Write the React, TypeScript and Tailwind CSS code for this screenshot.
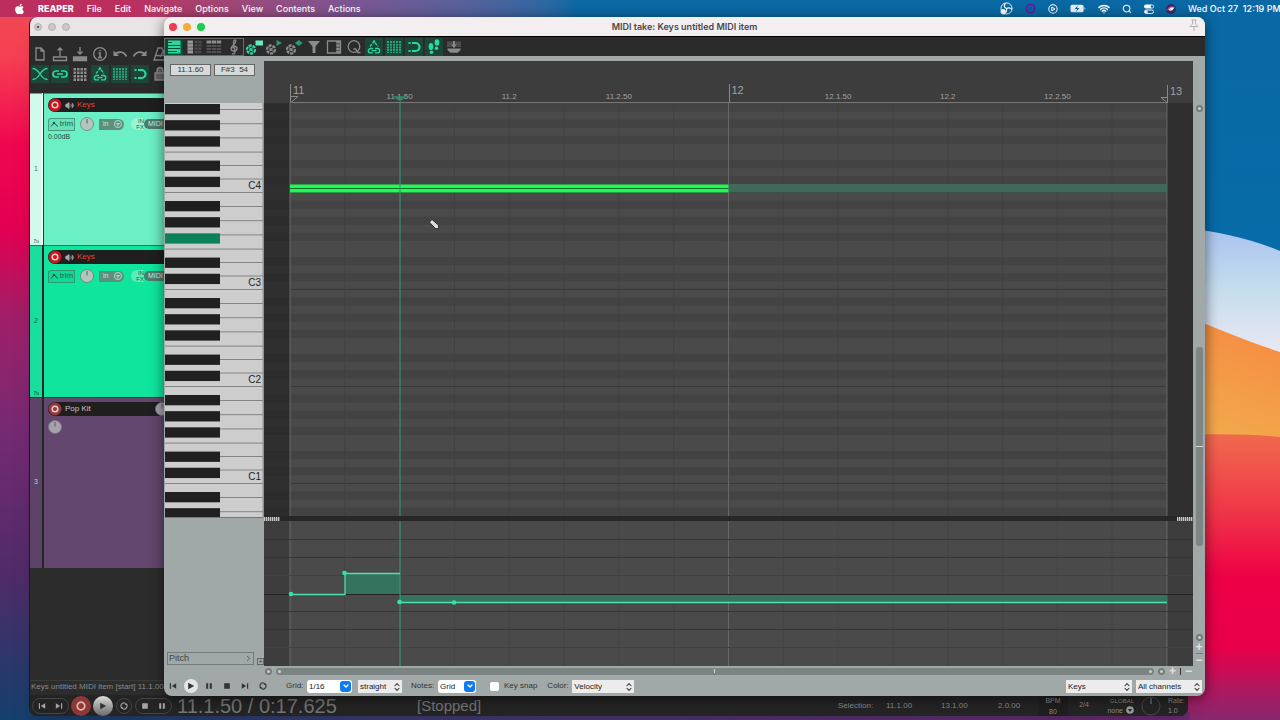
import React from 'react';
import { FaApple } from 'react-icons/fa';
import { ChevronDown, ChevronRight, ChevronsUpDown, CirclePlay, Search, Volume2, Wifi } from 'lucide-react';
import clsx from 'clsx';

const MENUS = ['File', 'Edit', 'Navigate', 'Options', 'View', 'Contents', 'Actions'];

const SEMITONE = 97 / 12;
// top edge of the A#4 row, measured from the top of the roll
const ROLL_OFFSET = 0.5;
const ROLL_HEIGHT = 413;
// going down from A#4
const BLACK_PATTERN = [true, false, true, false, true, false, false, true, false, true, false, false];

const rows = Array.from({ length: 52 }, (_, i) => ({
  y: ROLL_OFFSET + i * SEMITONE,
  black: BLACK_PATTERN[i % 12],
  isC: i % 12 === 10,
})).filter((r) => r.y < ROLL_HEIGHT);

const octaves = [4, 3, 2, 1, 0].map((n, i) => ({ n, bottom: 89.5 + i * 97 }));
const WHITE_EDGES = [13.5, 27, 40.4, 54.6, 68.8, 83];

const chain = <path d="M9 11.500H6.500a2.200 2.200 0 0 0 0 4.400H9M11 11.500h2.500a2.200 2.200 0 0 1 0 4.400H11M7.500 13.700h5" />;

const iconPaths: Record<string, React.ReactNode> = {
  file: <path d="M6 4h5l3 3v9H6zM11 4v3h3" />,
  open: <path d="M3.500 13h13v3.500h-13zM10 12V4M7.500 6.500 10 4l2.500 2.500" />,
  save: (
    <>
      <path d="M10 3v7M7.500 7.500 10 10l2.500-2.500" />
      <path d="M3.500 13h13v3.500h-13z" fill="currentColor" />
    </>
  ),
  info: (
    <>
      <circle cx="10" cy="10" r="6.300" />
      <path d="M8.500 9H10v4.500M8 13.500h4M10 6v1.300" strokeWidth="1.500" />
    </>
  ),
  undo: (
    <>
      <path d="M4.500 11c3-4 9-4 12 1.500" strokeWidth="1.700" />
      <path d="M3.500 6.500v5.500H9z" fill="currentColor" stroke="none" />
    </>
  ),
  redo: (
    <>
      <path d="M15.500 11c-3-4-9-4-12 1.500" strokeWidth="1.700" />
      <path d="M16.500 6.500v5.500H11z" fill="currentColor" stroke="none" />
    </>
  ),
  metro: <path d="M8 4h4l4 12H4zM5.500 11.500h9M10 13l4-7" />,
  fade: <path d="M2.500 4.500c8 0 7 11 15 11M2.500 15.500c8 0 7-11 15-11" />,
  link: <path d="M9 7H6a3 3 0 0 0 0 6h3M11 7h3a3 3 0 0 1 0 6h-3M7 10h6" strokeWidth="1.700" />,
  dots: (
    <g fill="currentColor" stroke="none">
      {[3.5, 7, 10.5, 14].map((x) => [4, 7.5, 11, 14.5].map((y) => <rect key={`${x}-${y}`} x={x} y={y} width="2.500" height="2.500" />))}
    </g>
  ),
  envLink: (
    <>
      <path d="M6 9.500 10 4.500l4 5" strokeDasharray="3 1" />
      <circle cx="10" cy="4.500" r="1.200" fill="currentColor" stroke="none" />
      {chain}
    </>
  ),
  grid: <path d="M4 4v12M7 4v12M10 4v12M13 4v12M16 4v12" strokeDasharray="2 0.700" />,
  snap: (
    <>
      <path d="M8 6h3.500a4 4 0 0 1 0 8H8" strokeWidth="2.200" />
      <path d="M4.500 6h2M4.500 14h2" strokeWidth="2.200" />
    </>
  ),
  lock: <path d="M5 9h10v7H5zM7 9V6.500a3 3 0 0 1 6 0V9" fill="currentColor" fillOpacity="0.6" />,
  pianoRoll: (
    <>
      <path d="M4 3.500h12.500v13H4z" fill="currentColor" stroke="none" />
      <path d="M4 5.500h4M4 8.500h12M4 11.500h12M4 14.500h9" stroke="#0d4a38" strokeWidth="1" />
    </>
  ),
  named: (
    <>
      <path d="M3.500 3.500h5.500v13H3.500z" fill="#999" stroke="none" />
      <path d="M3.500 6.700h5.500M3.500 10h5.500M3.500 13.300h5.500" stroke="#555" strokeWidth="0.800" />
      <path d="M10.500 5h7M10.500 8.300h7M10.500 11.600h7M10.500 15h7" stroke="#4c4c4c" strokeWidth="2.300" strokeDasharray="3.200 0.600" />
    </>
  ),
  eventList: (
    <>
      <path d="M2.500 5h15" strokeWidth="3" strokeDasharray="4.500 0.600" />
      <path d="M2.500 9h15M2.500 12h15M2.500 15h15" stroke="#505050" strokeWidth="2.200" strokeDasharray="4.500 0.600" />
    </>
  ),
  clef: <path d="M8 16.500c2 1.200 3.500-.5 3-2.500L9.500 6c-.4-2 1.500-4.500 2.300-2 .5 3-5.300 4.500-4.800 8 .5 3 6 2.500 6-.5 0-2.700-4-2.700-4 0" />,
  funnel: <path d="M4 4h12l-4.500 5.500V16h-3V9.500z" fill="currentColor" stroke="none" />,
  panel: (
    <>
      <path d="M3.500 4h13v12h-13z" />
      <path d="M14 4v12" strokeWidth="3.500" strokeDasharray="2.500 0.700" />
    </>
  ),
  quantize: (
    <>
      <circle cx="10" cy="9.500" r="5.800" />
      <path d="M9.500 12H11.500l2.500 3.500h2.500" />
    </>
  ),
  steps: (
    <g fill="currentColor" stroke="none">
      <ellipse cx="7" cy="9.500" rx="2.400" ry="3.500" />
      <ellipse cx="7.500" cy="15.300" rx="1.800" ry="1.800" />
      <ellipse cx="13" cy="5.500" rx="2.400" ry="3.300" />
      <ellipse cx="12.500" cy="11.200" rx="1.800" ry="1.700" />
    </g>
  ),
  dock: (
    <g fill="currentColor" stroke="none">
      <path d="M3 4.500h5V8H6l4 3 4-3h-2V4.500h5V10H3z" fillOpacity="0.35" />
      <path d="M8.800 4h2.400v3.500h2L10 11 6.800 7.500h2z" />
      <path d="M3.500 11.500h13v1.500l-3 2.800h-7L3.500 13z" />
    </g>
  ),
};

function plug(marker: React.ReactNode) {
  return (
    <>
      <circle cx="7" cy="12.500" r="4" strokeWidth="2.300" strokeDasharray="3 1" />
      <circle cx="7" cy="12.500" r="1.500" fill="currentColor" stroke="none" />
      <path d="M4 9.500l6 6M10 9.500l-6 6" strokeWidth="0.900" />
      {marker}
    </>
  );
}
iconPaths.plugRect = plug(<path d="M11.500 3.500H19v5h-7.500z" fill="#62efbb" stroke="none" />);
iconPaths.plugPlay = plug(<path d="M12.500 3v6l5.500-3z" fill="#2b9a74" stroke="none" />);
iconPaths.plugDiamond = plug(<path d="M11 6l3.800-3 3.800 3-3.800 3z" fill="#2b9a74" stroke="none" />);

function ToolIcon({ name, on, bright }: { name: string; on?: boolean; bright?: boolean }) {
  return (
    <button
      aria-label={name}
      className={clsx(
        'w-5 h-[18px] flex items-center justify-center shrink-0 border-x border-[#2a2c2b]',
        on ? 'bg-[#1d4538]' : '',
        on || bright ? 'text-[#2bd79c]' : 'text-[#8b8b8b]'
      )}
    >
      <svg className="w-5 h-5 shrink-0" viewBox="0 0 20 20" fill="none" stroke="currentColor" strokeWidth="1.300">
        {iconPaths[name]}
      </svg>
    </button>
  );
}

function Wallpaper() {
  return (
    <svg className="absolute inset-0 w-full h-full" viewBox="0 0 1280 720" preserveAspectRatio="none">
      <defs>
        <linearGradient id="left" x1="0" y1="0" x2="0" y2="1">
          <stop offset="0" stopColor="#ee4a56" />
          <stop offset="0.080" stopColor="#f63f52" />
          <stop offset="0.200" stopColor="#f00650" />
          <stop offset="0.320" stopColor="#e20052" />
          <stop offset="0.440" stopColor="#a01f68" />
          <stop offset="0.600" stopColor="#742a72" />
          <stop offset="0.800" stopColor="#4f2b68" />
          <stop offset="1" stopColor="#153f6c" />
        </linearGradient>
        <linearGradient id="sky" x1="0" y1="0" x2="0" y2="1">
          <stop offset="0" stopColor="#0a69a4" />
          <stop offset="1" stopColor="#066ca8" />
        </linearGradient>
        <linearGradient id="white" x1="0" y1="0" x2="0" y2="1">
          <stop offset="0" stopColor="#a9c2f0" />
          <stop offset="0.350" stopColor="#c4dcec" />
          <stop offset="0.700" stopColor="#e6e8f2" />
        </linearGradient>
        <linearGradient id="orange" x1="0.600" y1="0" x2="0.300" y2="1">
          <stop offset="0" stopColor="#f68a42" />
          <stop offset="1" stopColor="#f2ab4c" />
        </linearGradient>
        <linearGradient id="red" x1="0" y1="0" x2="0" y2="1">
          <stop offset="0" stopColor="#f06a4e" />
          <stop offset="0.250" stopColor="#f03a48" />
          <stop offset="0.500" stopColor="#ee0046" />
          <stop offset="0.750" stopColor="#e8004a" />
          <stop offset="1" stopColor="#85296e" />
        </linearGradient>
        <linearGradient id="floor" x1="0" y1="0" x2="1" y2="0">
          <stop offset="0" stopColor="#153f6c" />
          <stop offset="0.350" stopColor="#3f3b70" />
          <stop offset="1" stopColor="#6b2a70" />
        </linearGradient>
      </defs>
      <rect width="640" height="720" fill="url(#left)" />
      <rect x="640" width="640" height="300" fill="url(#sky)" />
      <path d="M1180 227Q1240 234 1280 251V400H1180z" fill="url(#white)" />
      <path d="M1180 313Q1240 339 1280 352V440H1180z" fill="url(#orange)" />
      <path d="M1180 435Q1240 433 1280 437V720H1180z" fill="url(#red)" />
      <rect y="712" width="1190" height="8" fill="url(#floor)" />
    </svg>
  );
}

function MenuBar() {
  return (
    <header className="relative h-[17px] flex items-center justify-between text-white text-[9px] font-medium font-['Inter',sans-serif] bg-linear-to-r from-[#bb2e5e] from-10% via-[#7d5592] via-27% to-[#0a69a4] to-45% overflow-hidden">
      <nav className="flex items-center gap-[13px] pl-[14px]">
        <FaApple className="w-[11px] h-3" />
        <button className="font-extrabold">REAPER</button>
        {MENUS.map((m) => (
          <button key={m}>{m}</button>
        ))}
      </nav>
      <div className="flex items-center gap-3 shrink-0 whitespace-nowrap">
        <svg className="w-[13px] h-[13px]" viewBox="0 0 14 14" fill="none" stroke="#fff">
          <circle cx="7" cy="7" r="6" />
          <path d="M7 7C4 6 4 3 6 1.500M7 7c3-2 5 0 6 1M7 7c1 3-1 5-3 5.500" strokeWidth="1.300" />
          <circle cx="3.500" cy="10.500" r="2.500" fill="#fff" />
        </svg>
        <svg className="w-[11px] h-[11px]" viewBox="0 0 12 12" fill="none" stroke="#5a1fa0">
          <circle cx="6" cy="6" r="4.500" strokeWidth="2" />
          <circle cx="6" cy="6" r="1.500" />
        </svg>
        <CirclePlay className="w-[10px] h-[10px]" strokeWidth={2.500} />
        <svg className="w-4 h-[9px]" viewBox="0 0 17 9">
          <rect x="0.500" y="0.500" width="14" height="8" rx="2" fill="#e7f0f6" />
          <path d="M15.500 3v3l1-1.500z" fill="#e7f0f6" />
          <path d="M8.500 1 5 5h2.500L6.500 8 10 4H7.500z" fill="#0a69a4" />
        </svg>
        <Wifi className="w-3 h-3" strokeWidth={3} />
        <Search className="w-[10px] h-[10px]" strokeWidth={2.500} />
        <svg className="w-[10px] h-[10px]" viewBox="0 0 10 10">
          <rect y="0.500" width="10" height="4" rx="2" fill="#fff" />
          <circle cx="8" cy="2.500" r="1.300" fill="#0a69a4" />
          <rect x="0.500" y="6" width="9" height="3.500" rx="1.700" fill="none" stroke="#fff" />
          <circle cx="2.300" cy="7.700" r="1.500" fill="#fff" />
        </svg>
        <svg className="w-[10px] h-[10px]" viewBox="0 0 10 10">
          <circle cx="5" cy="5" r="5" fill="#3a2c6a" />
          <path d="M1 6c2-4 4-4 8-3-2 2-5 4-8 3z" fill="#e8508c" />
          <path d="M3 6c2 2 4 0 5-2-3-1-4 0-5 2z" fill="#e9fbff" />
        </svg>
        <time className="w-[92px] whitespace-pre">Wed Oct 27  12:19 PM</time>
      </div>
    </header>
  );
}

function Knob({ dark }: { dark?: boolean }) {
  return (
    <svg className="w-[14px] h-[14px] shrink-0" viewBox="0 0 14 14">
      <circle cx="7" cy="7" r="6.500" fill={dark ? '#a9a0ae' : '#b5c6be'} stroke="#6f8079" strokeWidth="0.800" />
      <path d="M7 2v4.500" stroke="#55625c" strokeWidth="1" />
    </svg>
  );
}

interface TrackProps {
  index: number;
  name: string;
  color: string;
  side: string;
  height: string;
  volume?: string;
  armed?: boolean;
}

function Track({ index, name, color, side, height, volume, armed }: TrackProps) {
  return (
    <div className={clsx('flex shrink-0', height)}>
      <div className={clsx('w-3 flex flex-col items-center border-t border-black/40 text-[7px] leading-3', side, armed ? 'text-black/60' : 'text-white/70')}>
        <span className="flex-1" />
        <span>{index}</span>
        <span className="flex-1 flex items-end pb-[2px]">
          {armed && (
            <svg className="w-[5px] h-1 opacity-40" viewBox="0 0 5 4" fill="none" stroke="#000">
              <path d="M0 .5h2v1.500h3v2H0z" />
            </svg>
          )}
        </span>
      </div>
      <div className={clsx('w-[2px]', index === 1 ? 'bg-white border-r border-[#333]' : 'bg-[#252525]')} />
      <div className={clsx('flex-1 min-w-0 pl-1 pt-1 border-t border-black/40', color)}>
        <div className="h-[14px] rounded-l-full bg-[#1f1f1f] flex items-center gap-[3px]">
          <svg className="w-[14px] h-[14px] shrink-0" viewBox="0 0 14 14">
            <circle cx="7" cy="7" r="6.500" fill={armed ? '#c4161e' : '#8f3a3c'} />
            <circle cx="7" cy="7" r="2.800" fill="none" stroke="#f5c9c4" strokeWidth="1.500" />
          </svg>
          {armed && <Volume2 className="w-[9px] h-[9px] shrink-0 text-[#aaa] fill-[#aaa]" />}
          <span className={clsx('text-[8px] whitespace-nowrap', armed ? 'text-[#e04a28]' : 'text-[#c9c2cc]')}>{name}</span>
          {!armed && (
            <span className="ml-auto mr-[-3px]">
              <Knob dark />
            </span>
          )}
        </div>
        {armed ? (
          <div className="mt-[5px] flex items-center h-[14px] text-[8px] text-[#27594a]">
            <button className="w-[27px] h-[13px] border border-[#3f7c68]/70 bg-black/5 flex items-center justify-center gap-px rounded-tl-[3px]">
              <svg className="w-[9px] h-[7px]" viewBox="0 0 9 7" fill="none" stroke="#1f4a3c">
                <path d="M1 5.500 4 2l4 3.500" />
                <circle cx="4" cy="2" r="0.800" fill="#1f4a3c" />
              </svg>
              trim
            </button>
            <span className="ml-[5px]">
              <Knob />
            </span>
            <button className="ml-[5px] w-[25px] h-[11px] rounded-r-full bg-[#5d8f7d] text-[7px] text-[#c4e8da] flex items-center justify-between pl-1 pr-[2px]">
              in
              <svg className="w-2 h-2" viewBox="0 0 8 8">
                <circle cx="4" cy="4" r="3.500" fill="none" stroke="#b8dccd" />
                <path d="M2 3h4L4 6z" fill="#b8dccd" />
              </svg>
            </button>
            <span className="ml-[7px] w-[13px] h-3 bg-white/30 text-[6px] leading-[6px] text-right rounded-l-full">
              IN
              <br />
              FX
            </span>
            <span className="h-[10px] pl-1 bg-[#4f7a6b] text-[7px] leading-[10px] text-[#cfe9df] rounded-l-full flex-1 overflow-hidden">MIDI</span>
          </div>
        ) : (
          <div className="mt-1">
            <Knob dark />
          </div>
        )}
        {volume && <div className="mt-[2px] text-[7px] leading-[8px] text-[#1f4a3c]">{volume}</div>}
      </div>
    </div>
  );
}

function TransportShape({ kind, small }: { kind: string; small?: boolean }) {
  return (
    <svg className={clsx('shrink-0', small ? 'w-2 h-2' : 'w-[10px] h-[10px]')} viewBox="0 0 10 10" fill="currentColor" stroke="currentColor" strokeWidth="0">
      {kind === 'prev' && <path d="M1 1.500h1.500v7H1zM9 1.500v7L3.500 5z" />}
      {kind === 'next' && <path d="M7.500 1.500H9v7H7.500zM1 1.500v7L6.500 5z" />}
      {kind === 'play' && <path d="M1.500 1v8l7.500-4z" />}
      {kind === 'pause' && <path d="M1.500 1.500h2.500v7H1.500zM6 1.500h2.500v7H6z" />}
      {kind === 'stop' && <path d="M1.500 1.500h7v7h-7z" />}
      {kind === 'record' && <circle cx="5" cy="5" r="3.800" fill="none" strokeWidth="1.800" />}
      {kind === 'loop' && (
        <>
          <path d="M2.500 7.800A3.800 3.800 0 0 1 6 1.300M7.500 2.200A3.800 3.800 0 0 1 4 8.700" fill="none" strokeWidth="1.400" />
          <path d="M.5 6.500H4v3zM9.500 3.500H6v-3z" />
        </>
      )}
    </svg>
  );
}

function MainWindow() {
  return (
    <section className="absolute left-[29px] right-[92px] top-[17px] bottom-1 rounded-lg overflow-hidden bg-[#2c2c2c] flex flex-col shadow-xl border-l border-black/40 font-['Liberation_Sans',Arial,sans-serif]">
      <div className="h-[19px] shrink-0 bg-[#e9e5e7] flex items-center gap-[6px] pl-1">
        {[0, 1, 2].map((i) => (
          <button key={i} aria-label={`window ${i}`} className="w-2 h-2 rounded-full bg-[#cbc8ca] border border-[#b3b0b2] flex items-center justify-center">
            {i === 0 && <span className="w-[2px] h-[2px] rounded-full bg-[#333]" />}
          </button>
        ))}
      </div>
      <div className="h-[57px] shrink-0 pt-[9px] bg-[#2a2a2a]">
        <div className="flex">
          {['file', 'open', 'save', 'info', 'undo', 'redo', 'metro'].map((n) => (
            <ToolIcon key={n} name={n} />
          ))}
        </div>
        <div className="flex mt-[2px]">
          <ToolIcon name="fade" on />
          <ToolIcon name="link" on />
          <ToolIcon name="dots" />
          <ToolIcon name="envLink" on />
          <ToolIcon name="grid" on />
          <ToolIcon name="snap" on />
          <ToolIcon name="lock" />
        </div>
      </div>
      <div className="flex flex-col flex-1 min-h-0 w-[136px]">
        <Track index={1} name="Keys" armed volume="0.00dB" color="bg-[#6befc4]" side="bg-[#d2faec]" height="h-[152px]" />
        <Track index={2} name="Keys" armed color="bg-[#10e59e]" side="bg-[#17dd9d]" height="h-[152px]" />
        <Track index={3} name="Pop Kit" color="bg-[#63476e]" side="bg-[#5d4368]" height="h-[171px]" />
      </div>
      <div className="h-[13px] mb-[2px] shrink-0 pl-px text-[8px] leading-3 text-[#8a8a8a] border-t border-[#3a3a3a]">
        Keys untitled MIDI item [start] 11.1.00 [end] 13.1.00
      </div>
      <div className="h-[21px] shrink-0 bg-[#242424] flex items-center pl-[2px] text-[#a5a5a5]">
        <div className="w-[37px] h-4 rounded-full border border-[#444] flex items-center justify-around">
          <TransportShape kind="prev" small />
          <TransportShape kind="next" small />
        </div>
        <button aria-label="Record" className="ml-[2px] w-5 h-5 rounded-full bg-[#8d3835] text-[#dcb2ab] flex items-center justify-center">
          <TransportShape kind="record" />
        </button>
        <button aria-label="Play" className="ml-[2px] w-5 h-5 rounded-full bg-linear-to-b from-[#dcdcdc] to-[#6a6a6a] text-[#333] flex items-center justify-center">
          <TransportShape kind="play" small />
        </button>
        <button aria-label="Repeat" className="ml-[3px] w-4 h-4 rounded-full border border-[#444] flex items-center justify-center">
          <TransportShape kind="loop" small />
        </button>
        <div className="ml-[3px] w-[37px] h-4 rounded-full border border-[#444] flex items-center justify-around">
          <TransportShape kind="stop" small />
          <TransportShape kind="pause" small />
        </div>
        <span className="ml-[5px] w-[240px] text-[20px] leading-5 text-[#757575]">11.1.50 / 0:17.625</span>
        <span className="text-[15px] leading-5 text-[#757575]">[Stopped]</span>
        <div className="ml-auto flex items-center text-[8px] text-[#8a8a8a]">
          <span className="w-12">Selection:</span>
          <span className="w-[55px]">11.1.00</span>
          <span className="w-[57px]">13.1.00</span>
          <span className="w-10">2.0.00</span>
          <span className="w-[30px] text-center text-[7px] leading-[11px] bg-[#1f1f1f]">
            BPM
            <br />
            80
          </span>
          <span className="w-8 text-center text-[7px]">2/4</span>
          <span className="w-[34px] text-right text-[6px] leading-[9px] flex flex-col items-end">
            GLOBAL
            <span className="text-[7px] flex items-center gap-[3px]">
              none
              <svg className="w-2 h-2" viewBox="0 0 8 8">
                <circle cx="4" cy="4" r="3.800" fill="#9a9a9a" />
                <path d="M2 3h4L4 6z" fill="#222" />
              </svg>
            </span>
          </span>
          <svg className="w-5 h-5 mx-[7px]" viewBox="0 0 20 20" fill="none" stroke="#4a4a4a">
            <circle cx="10" cy="10" r="9" />
            <path d="M10 2v6" stroke="#8a8a8a" />
          </svg>
          <span className="w-5 text-[7px] leading-[10px]">
            Rate:
            <br />
            1.0
          </span>
        </div>
      </div>
    </section>
  );
}

function Keyboard() {
  return (
    <svg className="w-full h-[415px] shrink-0 block" viewBox="0 0 100 415">
      <rect x="1" width="98" height="415" fill="#cdcdcd" />
      <rect x="98.500" width="1.500" height="415" fill="#8e9492" />
      {octaves.map((o) => (
        <g key={o.n}>
          <path d={`M1 ${o.bottom}H99`} stroke="#848484" />
          {WHITE_EDGES.map((e) => (
            <path key={e} d={`M1 ${o.bottom - e}H99`} stroke="#848484" />
          ))}
          {o.n > 0 && (
            <text x="97" y={o.bottom - 4} textAnchor="end" fontSize="10" fill="#222">
              C{o.n}
            </text>
          )}
        </g>
      ))}
      {rows
        .filter((r) => r.black)
        .map((r) => (
          <g key={r.y}>
            <rect x="1" y={r.y + 1} width="55" height="12" fill="#cdcdcd" />
            <rect x="1" y={r.y + 0.5} width="55" height="10.300" fill={Math.round(r.y / SEMITONE) === 16 ? '#0c8058' : '#202020'} />
          </g>
        ))}
      <path d="M1 414.500H99" stroke="#777" />
    </svg>
  );
}

const DIVISIONS = Array.from({ length: 17 }, (_, i) => 26 + i * 54.81);

function Roll() {
  return (
    <svg className="w-full h-[413px] shrink-0 block" viewBox="0 0 929 413" preserveAspectRatio="none">
      <rect width="929" height="413" fill="#2f2f2f" />
      <rect x="26" width="877" height="413" fill="#4a4a4a" />
      {rows.map((r) => (
        <g key={r.y}>
          {r.black && <rect x="26" y={r.y} width="877" height={SEMITONE} fill="#434343" />}
          {r.black && <rect y={r.y} width="26" height={SEMITONE} fill="#2c2c2c" />}
          {r.isC && <path d={`M26 ${r.y + SEMITONE}H903`} stroke="#393939" />}
        </g>
      ))}
      {DIVISIONS.map((x, i) => (
        <path key={x} d={`M${x} 0V413`} stroke={i % 8 === 0 ? '#686868' : '#3f3f3f'} strokeWidth={i % 8 === 0 ? 1 : 0.7} />
      ))}
      <rect x="464.500" y="81" width="438.500" height="8.500" fill="#40695b" />
      <rect x="26" y="81.500" width="438.500" height="8" fill="#1ffb52" />
      <path d="M26 85.500H464.500" stroke="#146b2c" strokeWidth="1.200" />
      <path d="M136 0V413" stroke="#349676" strokeOpacity="0.750" strokeWidth="1.500" />
      <g transform="translate(165 116)">
        <path d="M.5 3.200 3 .5 9.300 6 9.800 9.800 6 9.300z" fill="#e8e8e8" stroke="#222" strokeWidth="0.900" />
        <path d="M2.500 4 6.500 8M4 2.500 8 6.500" stroke="#999" strokeWidth="0.500" />
      </g>
    </svg>
  );
}

function PitchLane() {
  return (
    <svg className="w-full flex-1 min-h-0 block" viewBox="0 0 929 145" preserveAspectRatio="none">
      <rect width="929" height="145" fill="#3d3d3d" />
      <rect x="26" width="877" height="145" fill="#4a4a4a" />
      {DIVISIONS.map((x, i) => (
        <path key={x} d={`M${x} 0V145`} stroke={i % 8 === 0 ? '#686868' : '#434343'} strokeWidth={i % 8 === 0 ? 1 : 0.7} />
      ))}
      {[18.5, 36.5, 54.5, 90.5, 108.5, 126.5].map((y) => (
        <path key={y} d={`M0 ${y}H929`} stroke={y === 54.5 || y === 126.5 ? '#414141' : '#363636'} />
      ))}
      <path d="M0 73.500H929" stroke="#222" />
      <path d="M81 52H136V73H81zM136 74H903V81H136z" fill="#35735e" />
      <path d="M136 0V145" stroke="#349676" strokeOpacity="0.800" strokeWidth="1.500" />
      <path d="M26 73.500H81V52.500H136M136 81.500H903" fill="none" stroke="#4fe0ab" strokeWidth="1.300" />
      {[
        [27, 73],
        [80.5, 52],
        [135.5, 81],
        [190, 81.5],
      ].map(([cx, cy]) => (
        <circle key={cx} cx={cx} cy={cy} r="2.300" fill="#2fe6a4" />
      ))}
    </svg>
  );
}

const RULER = ['11', '11.1.50', '11.2', '11.2.50', '12', '12.1.50', '12.2', '12.2.50'];

function Ruler() {
  return (
    <div className="h-[42px] shrink-0 bg-[#3d3d3d] flex text-[#a2a2a2] pl-[26px]">
      <div className="flex-1 grid grid-cols-8 items-end border-b border-[#777]">
        {RULER.map((label, i) =>
          i % 4 === 0 ? (
            <div key={label} className="relative h-[18px] border-l border-[#8a8a8a] pl-[2px] text-[11px] leading-3">
              {label}
              {i === 0 && (
                <svg className="absolute left-0 bottom-0 w-2 h-[6px]" viewBox="0 0 8 6" fill="none" stroke="#8a8a8a">
                  <path d="M0 .5h7L.5 6" />
                </svg>
              )}
            </div>
          ) : (
            <div key={label} className="relative text-[8px] leading-[11px] flex">
              <span className="-translate-x-1/2">{label}</span>
              {i === 1 && (
                <svg className="absolute left-0 bottom-0 -translate-x-1/2 w-[14px] h-[6px]" viewBox="0 0 12 7" preserveAspectRatio="none">
                  <path d="M0 0h12L6 7z" fill="#2f9673" fillOpacity="0.700" />
                </svg>
              )}
            </div>
          )
        )}
      </div>
      <div className="w-[26px] self-end">
        <div className="relative h-[18px] border-l border-[#8a8a8a] pl-[2px] text-[11px] leading-3">
          13
          <svg className="absolute right-full bottom-0 w-2 h-[6px]" viewBox="0 0 8 6" fill="none" stroke="#8a8a8a">
            <path d="M8 .5H1L7.500 6" />
          </svg>
        </div>
      </div>
    </div>
  );
}

function Grip() {
  return <span className="w-4 h-1 bg-[repeating-linear-gradient(90deg,#c9c9c9_0_1px,#666_1px_2px)]" />;
}

function Dot() {
  return (
    <span className="w-[7px] h-[7px] shrink-0 rounded-full bg-[#737c7a] flex items-center justify-center">
      <span className="w-[3px] h-[3px] rounded-full bg-[#c9cfcd]" />
    </span>
  );
}

function Picker({ label, value, options, width, blue }: { label: string; value: string; options: string[]; width: string; blue?: boolean }) {
  return (
    <span className={clsx('relative inline-flex h-[13px] shrink-0', width)}>
      <select
        aria-label={label}
        defaultValue={value}
        className={clsx('appearance-none w-full h-full pl-[2px] text-[8px] leading-[13px] text-[#222]', blue ? 'bg-white rounded-[3px]' : 'bg-[#ececec]')}
      >
        {options.map((o) => (
          <option key={o}>{o}</option>
        ))}
      </select>
      {blue ? (
        <span className="absolute right-px top-px w-[11px] h-[11px] rounded-[3px] bg-[#0f7bf2] flex items-center justify-center pointer-events-none">
          <ChevronDown className="w-2 h-2 text-white" strokeWidth={4} />
        </span>
      ) : (
        <ChevronsUpDown className="absolute right-0 top-[2px] w-[10px] h-[10px] text-[#333] pointer-events-none" strokeWidth={2.500} />
      )}
    </span>
  );
}

function EditorFooter() {
  return (
    <footer className="h-5 shrink-0 flex items-center pr-[3px] text-[8px] text-[#333]">
      <div className="flex items-center w-[122px]">
        {['prev', 'play', 'pause', 'stop', 'next', 'loop'].map((k) => (
          <button key={k} aria-label={k} className="w-[18px] h-[14px] flex items-center justify-center">
            <span className={clsx('flex items-center justify-center', k === 'play' && 'w-[14px] h-[14px] rounded-full bg-[#e3e6e5]')}>
              <TransportShape kind={k} small />
            </span>
          </button>
        ))}
      </div>
      <span className="w-[21px]">Grid:</span>
      <Picker label="Grid" value="1/16" options={['1/8', '1/16', '1/32']} width="w-[45px]" blue />
      <span className="w-[6px]" />
      <Picker label="Grid type" value="straight" options={['straight', 'triplet']} width="w-[44px]" />
      <span className="w-[27px] ml-[9px]">Notes:</span>
      <Picker label="Notes" value="Grid" options={['Grid', '1/16']} width="w-[38px]" blue />
      <label className="flex items-center ml-[14px]">
        <input type="checkbox" className="appearance-none w-[9px] h-[9px] rounded-[2px] bg-white mr-[5px]" />
        Key snap
      </label>
      <span className="w-[25px] ml-[10px]">Color:</span>
      <Picker label="Color" value="Velocity" options={['Velocity', 'Channel', 'Pitch']} width="w-[62px]" />
      <span className="ml-auto flex gap-1">
        <Picker label="Track" value="Keys" options={['Keys', 'Pop Kit']} width="w-[66px]" />
        <Picker label="Channel" value="All channels" options={['All channels', '1']} width="w-[66px]" />
      </span>
    </footer>
  );
}

function MidiEditor() {
  return (
    <section className="absolute left-[164px] right-[75px] top-[17px] bottom-6 rounded-lg overflow-hidden bg-[#a0a9a7] flex flex-col shadow-[0_2px_14px_rgba(0,0,0,0.55)] font-['Liberation_Sans',Arial,sans-serif]">
      <div className="relative h-[19px] shrink-0 bg-[#f3eff1] flex items-center justify-center font-['Inter',sans-serif]">
        <div className="absolute left-[5px] flex gap-[6px]">
          <button aria-label="Close" className="w-2 h-2 rounded-full bg-[#ee3f50]" />
          <button aria-label="Minimize" className="w-2 h-2 rounded-full bg-[#f2ae3c]" />
          <button aria-label="Zoom" className="w-2 h-2 rounded-full bg-[#17cf48]" />
        </div>
        <h1 className="text-[9px] font-semibold text-[#4a4648]">MIDI take: Keys untitled MIDI item</h1>
        <svg className="absolute right-[6px] top-[2px] w-[10px] h-3" viewBox="0 0 10 12" fill="none" stroke="#b5b1b3">
          <path d="M2.500 1h5M3.500 1v4L1 7.500h8L6.500 5V1M5 7.500V12" />
        </svg>
      </div>
      <div className="h-5 shrink-0 bg-[#2b2b2b] flex items-center border-t border-black">
        <div className="flex outline outline-[#6a6a6a] -outline-offset-1">
          <span className="bg-[#0d4a38]">
            <ToolIcon name="pianoRoll" bright />
          </span>
          <ToolIcon name="named" />
          <ToolIcon name="eventList" />
          <ToolIcon name="clef" />
        </div>
        <ToolIcon name="plugRect" bright />
        <ToolIcon name="plugPlay" />
        <ToolIcon name="plugDiamond" />
        <ToolIcon name="funnel" />
        <ToolIcon name="panel" />
        <ToolIcon name="quantize" />
        <ToolIcon name="envLink" on />
        <ToolIcon name="grid" on />
        <ToolIcon name="snap" on />
        <ToolIcon name="steps" on />
        <ToolIcon name="dock" />
      </div>
      <div className="flex flex-1 min-h-0">
        <div className="w-[100px] shrink-0 flex flex-col pt-2">
          <div className="h-[39px] flex items-start gap-[3px] pl-[6px] text-[8px] leading-[10px] text-[#333]">
            <span className="w-[41px] text-center bg-[#d6dad9] border border-[#666]">11.1.60</span>
            <span className="w-[41px] text-center bg-[#d6dad9] border border-[#666] whitespace-pre">F#3  54</span>
          </div>
          <Keyboard />
          <div className="mt-auto flex items-end gap-[3px] pl-[3px] pb-px">
            <button className="w-[87px] h-[13px] border border-[#727a78] pl-px flex items-center justify-between text-[9px] text-[#444]">
              Pitch
              <ChevronRight className="w-[9px] h-[9px]" />
            </button>
            <button aria-label="Add lane" className="w-[7px] h-[7px] border border-[#666] flex items-center justify-center text-[7px] leading-none text-[#444]">
              +
            </button>
          </div>
        </div>
        <div className="flex-1 min-w-0 flex flex-col pt-[5px]">
          <Ruler />
          <Roll />
          <div className="h-[5px] shrink-0 bg-[#272727] flex items-center justify-between">
            <Grip />
            <Grip />
          </div>
          <PitchLane />
        </div>
        <div className="w-3 shrink-0 flex flex-col items-center pt-[49px]">
          <Dot />
          <span className="flex-[234]" />
          <span className="flex-[198] w-[7px] rounded-[3px] bg-[#7d8684] flex items-center">
            <span className="w-full h-px bg-[#d5dad8]" />
          </span>
          <span className="flex-[88]" />
          <Dot />
          <span className="text-[12px] leading-3 font-bold text-[#dfe3e2]">+</span>
          <span className="w-[7px] h-px bg-[#737c7a]" />
          <span className="text-[12px] leading-3 font-bold text-[#dfe3e2]">−</span>
        </div>
      </div>
      <div className="h-[10px] shrink-0 flex items-center pl-[101px] pr-[13px] gap-1">
        <Dot />
        <div className="flex-1 h-[7px] rounded-[3px] bg-[#7b8482] flex items-center justify-between px-[2px]">
          <span className="w-[3px] h-[3px] rounded-full bg-[#c9cfcd]" />
          <span className="w-px h-1 bg-[#d5dad8]" />
          <span className="w-[3px] h-[3px] rounded-full bg-[#c9cfcd]" />
        </div>
        <Dot />
        <span className="text-[12px] leading-[9px] font-bold text-[#dfe3e2]">+</span>
        <span className="w-px h-[7px] bg-[#333]" />
        <span className="text-[12px] leading-[9px] font-bold text-[#dfe3e2]">−</span>
      </div>
      <EditorFooter />
    </section>
  );
}

export default function App() {
  return (
    <main className="relative h-screen w-full overflow-hidden">
      <Wallpaper />
      <MenuBar />
      <MainWindow />
      <MidiEditor />
    </main>
  );
}
